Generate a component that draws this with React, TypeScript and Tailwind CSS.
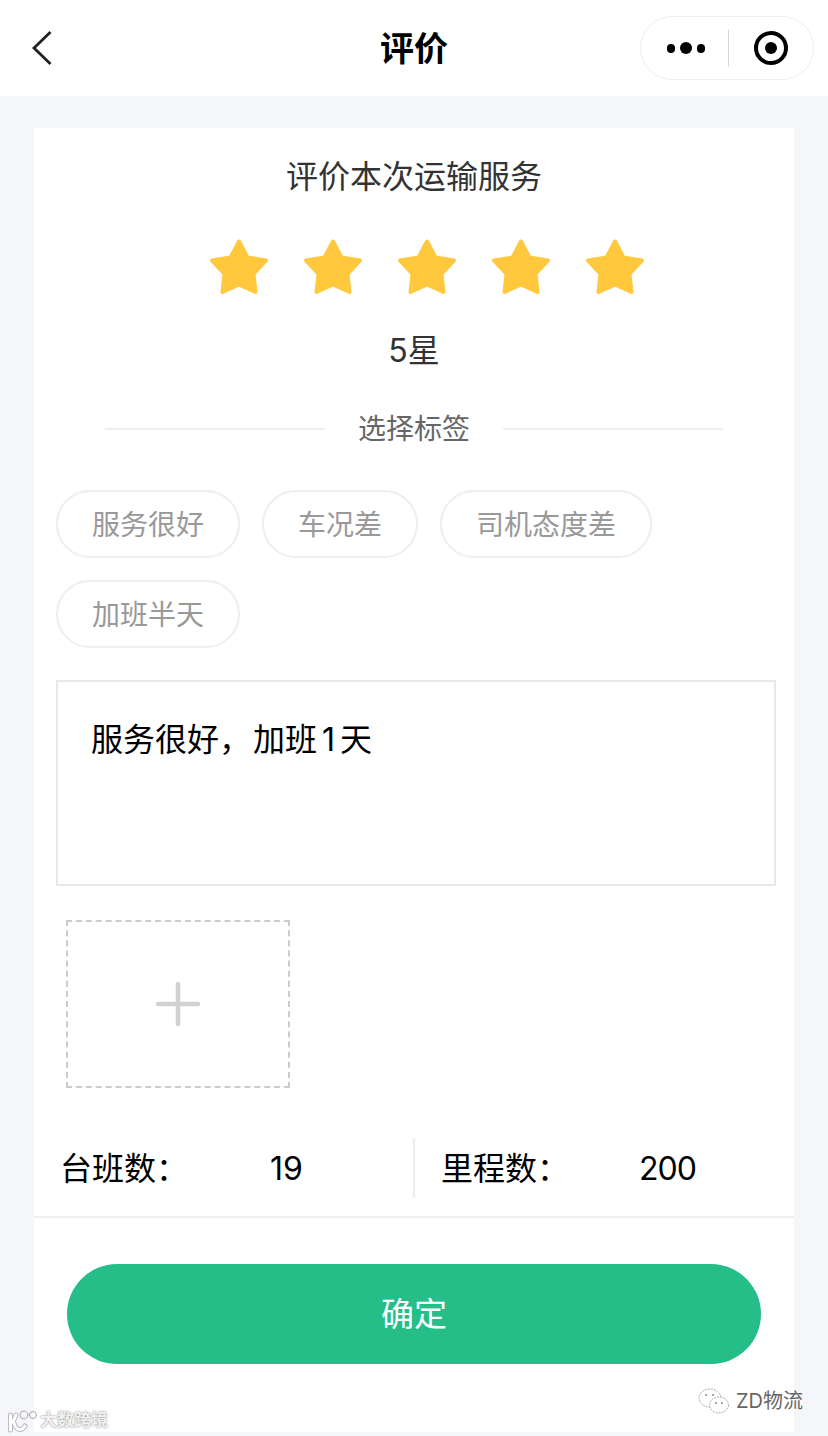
import React from "react";

const tags = [
  ["服务很好", "w-[184px]"],
  ["车况差", "w-[156px]"],
  ["司机态度差", "w-[212px]"],
  ["加班半天", "w-[184px]"],
];

const Star = () => (
  <svg width="64" height="60" viewBox="0 0 64 60" className="block">
    <path
      d="M32 4.5 L40.5 20.5 L59 23.5 L46.5 37 L48.5 55 L32 47.5 L15.5 55 L17.5 37 L5 23.5 L23.5 20.5 Z"
      fill="#ffc83d"
      stroke="#ffc83d"
      strokeWidth="4"
      strokeLinejoin="round"
    />
  </svg>
);

const App: React.FC = () => {
  return (
    <div className="relative w-[828px] h-[1436px] overflow-hidden bg-[#f5f6fa] font-['Inter','Noto_Sans_CJK_SC',sans-serif]">
      {/* 顶部导航 */}
      <div className="relative flex h-[96px] items-center justify-center bg-white">
        <svg width="24" height="36" viewBox="0 0 24 36" className="absolute left-[30px] top-[30px]">
          <path d="M20.5 2 L4 18 L20.5 34" fill="none" stroke="#222" strokeWidth="2.8" />
        </svg>
        <span className="text-[34px] font-bold text-black">评价</span>
        <div className="absolute right-[14px] top-[16px] flex h-[64px] w-[174px] items-center rounded-full border border-[#eeeeee] bg-white">
          <div className="flex w-[87px] items-center justify-center gap-[5px] pl-[3px]">
            <i className="h-[9px] w-[8px] rounded-full bg-black" />
            <i className="h-[12px] w-[12px] rounded-full bg-black" />
            <i className="h-[9px] w-[8px] rounded-full bg-black" />
          </div>
          <div className="h-[37px] w-px bg-[#d8d8d8]" />
          <div className="flex flex-1 items-center justify-center">
            <div className="flex h-[34px] w-[34px] items-center justify-center rounded-full border-[4px] border-black">
              <i className="h-[12px] w-[12px] rounded-full bg-black" />
            </div>
          </div>
        </div>
      </div>

      {/* 评价卡片 */}
      <div className="mx-[34px] mt-[32px] h-[1304px] w-[760px] bg-white">
        <div className="pt-[27px] text-center text-[32px] leading-[44px] text-[#333]">评价本次运输服务</div>
        <div className="mt-[38px] flex justify-center gap-[30px] pl-[26px]">
          <Star />
          <Star />
          <Star />
          <Star />
          <Star />
        </div>
        <div className="mt-[32px] text-center text-[32px] leading-[44px] text-[#333]">5星</div>
        <div className="mt-[36px] flex items-center justify-center gap-[33px]">
          <div className="h-[2px] w-[220px] bg-[#eeeeee]" />
          <span className="text-[28px] leading-[40px] text-[#666]">选择标签</span>
          <div className="h-[2px] w-[220px] bg-[#eeeeee]" />
        </div>
        <div className="mt-[41px] flex flex-wrap gap-x-[22px] gap-y-[22px] px-[22px]">
          {tags.map(([label, width]) => (
            <div
              key={label}
              className={`flex h-[68px] items-center justify-center rounded-full border-2 border-[#eeeeee] pt-[2px] text-[28px] text-[#999] ${width}`}
            >
              {label}
            </div>
          ))}
        </div>
        <div className="mx-[22px] mt-[32px] h-[206px] w-[720px] border-2 border-[#e8e8e8] px-[33px] pt-[36px] text-[32px] leading-[44px] text-black">
          服务很好，<span className="ml-[2px]">加班</span>
          <span className="mx-[5px]">1</span>天
        </div>
        <div className="ml-[32px] mt-[34px] flex h-[168px] w-[224px] items-center justify-center border-2 border-dashed border-[#cccccc]">
          <svg width="46" height="46" viewBox="0 0 46 46">
            <path d="M23 3 V43 M3 23 H43" stroke="#d2d2d2" strokeWidth="4.5" strokeLinecap="round" />
          </svg>
        </div>
        <div className="mt-[50px] flex h-[60px] items-center">
          <div className="relative flex h-full w-[379px] items-center pl-[26px] pt-[1px] text-[32px] text-black">
            台班数：
            <span className="absolute left-[236px]">19</span>
          </div>
          <div className="h-full w-[2px] bg-[#eeeeee]" />
          <div className="relative flex h-full flex-1 items-center pl-[26px] pt-[1px] text-[32px] text-black">
            里程数：
            <span className="absolute left-[224px] tracking-[-1px]">200</span>
          </div>
        </div>
        <div className="mt-[18px] h-[2px] bg-[#eeeeee]" />
        <div className="mx-[33px] mt-[46px] flex h-[100px] w-[694px] items-center justify-center rounded-full bg-[#25bd88] pt-[1px] text-[33px] text-white">
          确定
        </div>
      </div>

      {/* 水印 */}
      <div className="absolute left-[8px] top-[1408px] flex items-center gap-[2px] text-[17px] font-bold text-[#f2f2f2] [text-shadow:0_0_2px_#777]">
        <svg width="30" height="24" viewBox="0 0 30 24">
          <g fill="none" strokeLinecap="round">
            <path d="M2.5 6 V21 M6 14 C8 22 14 22 17 17 M8 6 L5 13" stroke="#bbbbbb" strokeWidth="5" />
            <path d="M2.5 6 V21 M6 14 C8 22 14 22 17 17 M8 6 L5 13" stroke="#ffffff" strokeWidth="3" />
            <circle cx="16" cy="6" r="4" stroke="#aaaaaa" strokeWidth="1" />
            <circle cx="25" cy="6" r="3.5" stroke="#aaaaaa" strokeWidth="1" />
          </g>
        </svg>
        大数跨境
      </div>
      <div className="absolute left-[698px] top-[1386px] flex items-center gap-[6px] text-[20px] leading-[30px] text-[#666]">
        <svg width="32" height="28" viewBox="0 0 32 28">
          <g fill="#fff" stroke="#aaa" strokeWidth="1">
            <ellipse cx="12" cy="11" rx="11" ry="9" strokeDasharray="2 1" />
            <ellipse cx="21" cy="18" rx="9.5" ry="8" strokeDasharray="2 1" />
          </g>
          <circle cx="8" cy="8" r="1" fill="#888" />
          <circle cx="15" cy="8" r="1" fill="#888" />
          <circle cx="18" cy="16" r="1" fill="#888" />
          <circle cx="24" cy="16" r="1" fill="#888" />
        </svg>
        ZD物流
      </div>
    </div>
  );
};

export default App;
